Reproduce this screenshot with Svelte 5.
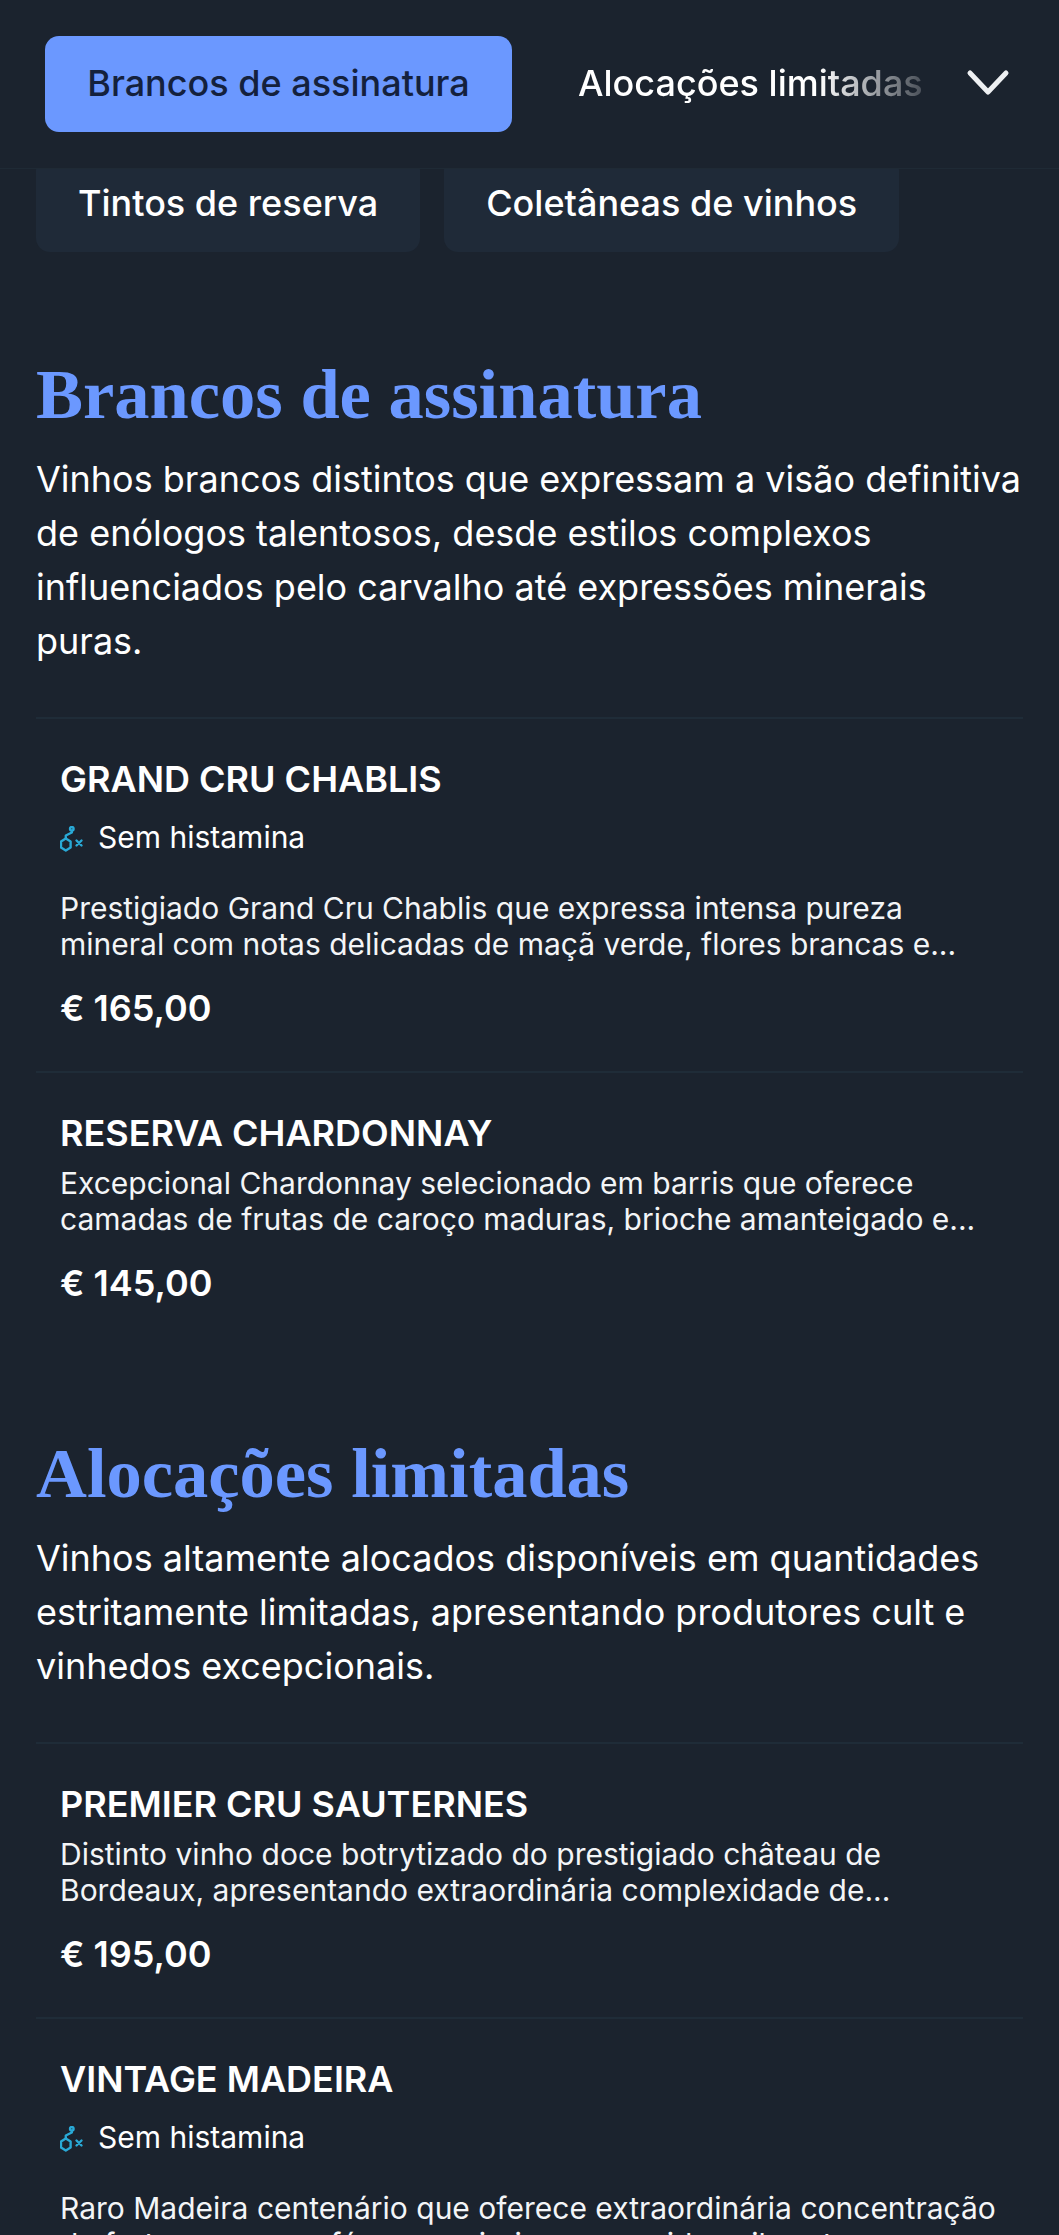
<script>
  const tabs = ['Tintos de reserva', 'Coletâneas de vinhos'];
  const sections = [
    {
      title: 'Brancos de assinatura',
      intro: 'Vinhos brancos distintos que expressam a visão definitiva de enólogos talentosos, desde estilos complexos influenciados pelo carvalho até expressões minerais puras.',
      items: [
        { name: 'GRAND CRU CHABLIS', tag: true, desc: 'Prestigiado Grand Cru Chablis que expressa intensa pureza mineral com notas delicadas de maçã verde, flores brancas e...', price: '€ 165,00' },
        { name: 'RESERVA CHARDONNAY', desc: 'Excepcional Chardonnay selecionado em barris que oferece camadas de frutas de caroço maduras, brioche amanteigado e...', price: '€ 145,00' }
      ]
    },
    {
      title: 'Alocações limitadas',
      intro: 'Vinhos altamente alocados disponíveis em quantidades estritamente limitadas, apresentando produtores cult e vinhedos excepcionais.',
      items: [
        { name: 'PREMIER CRU SAUTERNES', desc: 'Distinto vinho doce botrytizado do prestigiado château de Bordeaux, apresentando extraordinária complexidade de...', price: '€ 195,00' },
        { name: 'VINTAGE MADEIRA', tag: true, desc: 'Raro Madeira centenário que oferece extraordinária concentração de frutas secas, café e especiarias com acidez vibrante...', price: '€ 185,00' }
      ]
    }
  ];
</script>

<div class="page">
  <header class="topbar">
    <button class="tab active">Brancos de assinatura</button>
    <div class="scroller"><span>Alocações limitadas</span></div>
    <svg class="chevron" viewBox="0 0 44 30" width="44" height="30" fill="none" stroke="#eef0f2" stroke-width="5" stroke-linecap="round" stroke-linejoin="round">
      <path d="M4 6 L22 25 L40 6" />
    </svg>
  </header>

  <nav class="tabs">
    {#each tabs as tab}
      <button class="tab">{tab}</button>
    {/each}
  </nav>

  {#each sections as section}
    <section>
      <h2>{section.title}</h2>
      <p class="intro">{section.intro}</p>
      {#each section.items as item}
        <article>
          <h3>{item.name}</h3>
          {#if item.tag}
            <div class="tag">
              <svg viewBox="0 0 24 26" width="24" height="26" fill="none" stroke="#29a9d6" stroke-width="2.4" stroke-linecap="round" stroke-linejoin="round">
                <path d="M5.8 12.5 L1 15.5 V21.5 L5.8 24.5 L10.6 21.5 V15.5 Z" />
                <path d="M5.8 12.5 V9.5 L11.8 6.5 V4.8" />
                <circle cx="11.8" cy="2.8" r="1.8" />
                <path d="M16.5 14.5 L21.5 19.5 M21.5 14.5 L16.5 19.5" />
              </svg>
              <span>Sem histamina</span>
            </div>
          {/if}
          <p class="desc">{item.desc}</p>
          <div class="price">{item.price}</div>
        </article>
      {/each}
    </section>
  {/each}
</div>

<style>
  :global(body) {
    margin: 0;
    background: #1b232e;
  }

  .page {
    position: relative;
    height: 2235px;
    overflow: hidden;
    background: #1b232e;
    color: #fff;
    font-family: Inter, "Liberation Sans", sans-serif;
    box-sizing: border-box;
    padding: 0 36px;
  }

  .topbar {
    position: absolute;
    top: 0;
    left: 0;
    right: 0;
    height: 169px;
    box-sizing: border-box;
    padding: 36px 45px 0;
    display: flex;
    align-items: flex-start;
    background: #1b232e;
    border-bottom: 1px solid #1f2a35;
    z-index: 2;
  }

  .tab {
    height: 96px;
    border: none;
    border-radius: 14px;
    padding: 0 42px 2px;
    font: 500 36px Inter, "Liberation Sans", sans-serif;
    color: #fff;
    background: #1f2a38;
    white-space: nowrap;
    flex: none;
  }

  .tab.active {
    background: #6b98ff;
    color: #14213d;
    padding: 0 36px 2px;
    width: 467px;
  }

  .scroller {
    width: 344px;
    height: 94px;
    margin-left: 66px;
    display: flex;
    align-items: center;
    overflow: hidden;
    font-size: 36px;
    font-weight: 500;
    white-space: nowrap;
    -webkit-mask-image: linear-gradient(to right, #000 70%, transparent 108%);
    mask-image: linear-gradient(to right, #000 70%, transparent 108%);
  }

  .chevron {
    margin: 31px 0 0 44px;
    flex: none;
  }

  .tabs {
    display: flex;
    gap: 24px;
    padding-top: 156px;
  }

  section {
    margin-bottom: 87px;
  }

  .tabs + section {
    margin-top: 102px;
  }

  h2 {
    margin: 0;
    font: 700 70.5px/80px "Liberation Serif", serif;
    color: #6b98ff;
  }

  .intro {
    margin: 0 0 49px;
    font-size: 36px;
    line-height: 54px;
    padding-top: 18px;
  }

  article {
    border-top: 2px solid #1f2c38;
    padding: 36px 24px 39px;
  }

  h3 {
    margin: 0 0 8px;
    font-size: 36px;
    line-height: 48px;
    font-weight: 600;
  }

  .tag {
    display: flex;
    align-items: center;
    gap: 14px;
    font-size: 30px;
    line-height: 36px;
    margin: 16px 0 35px;
  }

  .tag svg {
    margin-top: 3px;
  }

  .desc {
    margin: 0;
    font-size: 30px;
    line-height: 36px;
    color: #f3f5f7;
  }

  .price {
    margin-top: 22px;
    font-size: 36px;
    line-height: 48px;
    font-weight: 600;
  }
</style>
